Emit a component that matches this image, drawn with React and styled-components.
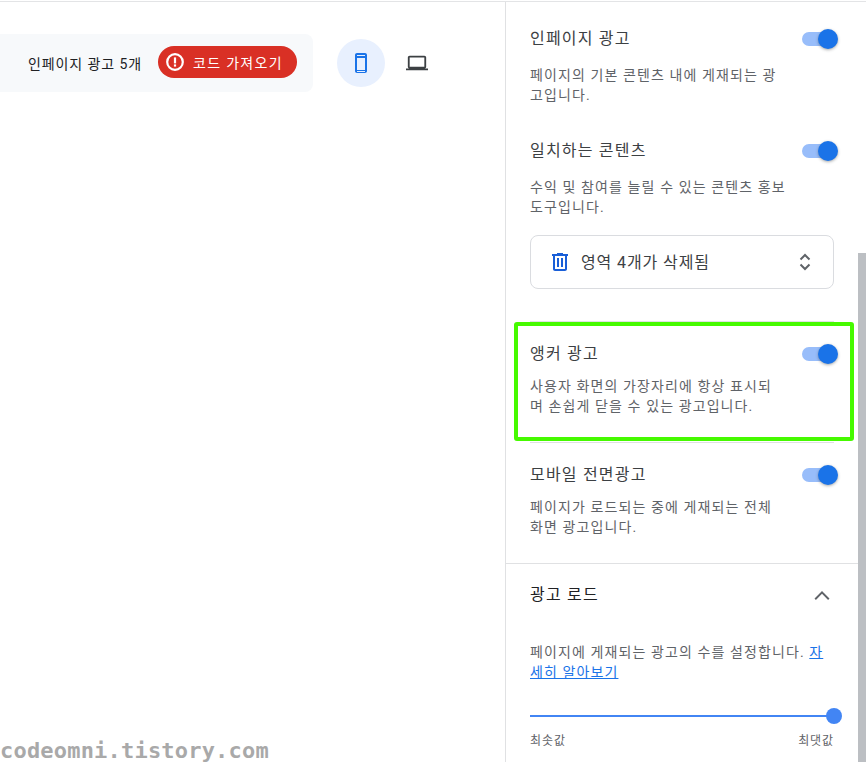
import styled, { createGlobalStyle } from "styled-components";

const GlobalStyle = createGlobalStyle`
  html, body { margin: 0; padding: 0; background: #fff; }
  body { font-family: Roboto, "Noto Sans CJK KR", sans-serif; overflow: hidden; }
`;

const Page = styled.div`
  position: relative;
  width: 866px;
  height: 761px;
  overflow: hidden;
  display: flex;
  border-top: 1px solid #e3e4e6;
  margin-top: 1px;
  box-sizing: border-box;
`;

const Main = styled.div`
  width: 505px;
  flex: none;
  padding-top: 32px;
  box-sizing: border-box;
  display: flex;
  align-items: flex-start;
`;

const Toolbar = styled.div`
  width: 313px;
  height: 58px;
  flex: none;
  background: #f7f9fb;
  border-radius: 0 8px 8px 0;
  display: flex;
  align-items: center;
  padding-left: 28px;
  box-sizing: border-box;
`;

const AdCount = styled.span`
  font-size: 14px;
  color: #202124;
  letter-spacing: 0.9px;
  width: 130px;
  flex: none;
`;

const CodeButton = styled.button`
  width: 139px;
  height: 32px;
  margin-top: -2px;
  border: 0;
  border-radius: 16px;
  background: #d93025;
  color: #fff;
  font: 400 14px Roboto, "Noto Sans CJK KR", sans-serif;
  display: flex;
  align-items: center;
  gap: 8px;
  padding: 0 0 0 7px;
  box-sizing: border-box;
  letter-spacing: 1.3px;
`;

const DeviceGroup = styled.div`
  display: flex;
  align-items: center;
  gap: 8px;
  margin-left: 24px;
  margin-top: 5px;
`;

const DeviceButton = styled.div`
  width: 48px;
  height: 48px;
  border-radius: 50%;
  background: ${(p) => (p.$active ? "#e8f0fe" : "transparent")};
  display: flex;
  align-items: center;
  justify-content: center;
`;

const Panel = styled.aside`
  width: 361px;
  flex: none;
  border-left: 1px solid #e0e1e3;
  box-sizing: border-box;
  display: flex;
  flex-direction: column;
`;

const FormatList = styled.div`
  padding: 25px 32px 0 24px;
  display: flex;
  flex-direction: column;
`;

const Format = styled.div`
  padding-top: ${(p) => p.$pt || 0}px;
  padding-bottom: ${(p) => p.$pb}px;
`;

const FormatHead = styled.div`
  display: flex;
  align-items: center;
  justify-content: space-between;
  height: 24px;
`;

const FormatTitle = styled.div`
  font-size: 16px;
  line-height: 24px;
  color: #3c4043;
  letter-spacing: 1.2px;
`;

const FormatDesc = styled.p`
  margin: ${(p) => p.$mt || 14}px 0 0;
  width: ${(p) => p.$w || 254}px;
  font-size: 14px;
  line-height: 20px;
  color: #5f6368;
  letter-spacing: 1.1px;
`;

const Switch = styled.div`
  position: relative;
  width: 32px;
  height: 14px;
  border-radius: 7px;
  background: #98bdfa;
`;

const Knob = styled.span`
  position: absolute;
  right: -4px;
  top: -3px;
  width: 20px;
  height: 20px;
  border-radius: 50%;
  background: #1a73e8;
  box-shadow: 0 1px 3px rgba(60, 64, 67, 0.45);
`;

const DeletedBox = styled.div`
  height: 54px;
  border: 1px solid #dadce0;
  border-radius: 8px;
  box-sizing: border-box;
  margin: 18px 0 0;
  display: flex;
  align-items: center;
  padding: 0 20px 0 17px;
  font-size: 16px;
  color: #3c4043;
  letter-spacing: 0.9px;
  gap: 9px;
`;

const DeletedText = styled.span`
  flex: 1;
  padding-bottom: 2px;
`;

const Divider = styled.div`
  height: 1px;
  flex: none;
  background: #e0e1e3;
`;

const LoadSection = styled.section`
  padding: 19px 32px 0 24px;
`;

const LoadHead = styled.div`
  display: flex;
  align-items: center;
  justify-content: space-between;
  height: 24px;
`;

const LoadTitle = styled.div`
  font-size: 16px;
  line-height: 24px;
  color: #202124;
  letter-spacing: 1.2px;
`;

const LoadDesc = styled.p`
  margin: 35px 0 0;
  font-size: 14px;
  line-height: 20px;
  color: #5f6368;
  letter-spacing: 1.1px;
  width: 304px;

  a {
    color: #1a73e8;
    text-decoration: underline;
  }
`;

const SliderTrack = styled.div`
  position: relative;
  height: 2px;
  margin-top: 33px;
  background: #4285f4;
  width: 304px;
`;

const SliderThumb = styled.span`
  position: absolute;
  right: -8px;
  top: -7px;
  width: 16px;
  height: 16px;
  border-radius: 50%;
  background: #4285f4;
`;

const SliderLabels = styled.div`
  display: flex;
  justify-content: space-between;
  margin-top: 16px;
  font-size: 12px;
  line-height: 16px;
  color: #5f6368;
  letter-spacing: 0.9px;
`;

const ScrollThumb = styled.div`
  position: absolute;
  left: 858px;
  top: 251px;
  width: 8px;
  height: 520px;
  background: #bcbfc3;
`;

const Highlight = styled.div`
  position: absolute;
  left: 514px;
  top: 320px;
  width: 340px;
  height: 119px;
  box-sizing: border-box;
  border: 4px solid #46fa00;
  border-radius: 3px;
`;

const Watermark = styled.div`
  position: absolute;
  left: 0;
  top: 736px;
  font: 700 22px "DejaVu Sans Mono", "Liberation Mono", monospace;
  line-height: 26px;
  color: #a9a9a9;
  letter-spacing: 0.2px;
`;

const AlertIcon = () => (
  <svg width="20" height="20" viewBox="0 0 20 20" fill="none">
    <circle cx="10" cy="10" r="7.8" stroke="#fff" strokeWidth="2.2" />
    <rect x="8.9" y="5.4" width="2.2" height="6" fill="#fff" />
    <rect x="8.9" y="12.4" width="2.2" height="2.2" fill="#fff" />
  </svg>
);

const PhoneIcon = () => (
  <svg width="24" height="24" viewBox="0 0 24 24" fill="#1a73e8">
    <path d="M16 2H8C6.900 2 6 2.900 6 4v16c0 1.100.9 2 2 2h8c1.100 0 2-.9 2-2V4c0-1.100-.9-2-2-2zm0 2v1H8V4h8zM8 19V7h8v12H8zm0 1.990V20h8v1l-8-.01z" />
  </svg>
);

const LaptopIcon = () => (
  <svg width="22" height="22" viewBox="0 0 24 24" fill="#3c4043">
    <path d="M20 18c1.100 0 2-.9 2-2V6c0-1.100-.9-2-2-2H4c-1.100 0-2 .9-2 2v10c0 1.100.9 2 2 2H0v2h24v-2h-4zM4 6h16v10H4V6z" />
  </svg>
);

const TrashIcon = () => (
  <svg width="24" height="24" viewBox="0 0 24 24" fill="#1a5fd8">
    <path d="M15 4V3H9v1H4v2h1v13c0 1.100.9 2 2 2h10c1.100 0 2-.9 2-2V6h1V4h-5zm2 15H7V6h10v13z" />
    <path d="M9 8h2v9H9zm4 0h2v9h-2z" />
  </svg>
);

const UpDownIcon = () => (
  <svg width="16" height="22" viewBox="0 0 16 22" fill="none" stroke="#5f6368" strokeWidth="2">
    <path d="M3.500 8.500 8 4l4.500 4.500M3.500 13.500 8 18l4.500-4.500" />
  </svg>
);

const ChevronUp = () => (
  <svg width="24" height="24" viewBox="0 0 24 24" fill="#5f6368">
    <path d="M12 8l-7.500 7.500 1.400 1.400L12 10.800l6.100 6.100 1.400-1.400z" />
  </svg>
);

const Toggle = () => (
  <Switch>
    <Knob />
  </Switch>
);

function App() {
  return (
    <Page>
      <GlobalStyle />
      <Main>
        <Toolbar>
          <AdCount>인페이지 광고 5개</AdCount>
          <CodeButton>
            <AlertIcon />
            코드 가져오기
          </CodeButton>
        </Toolbar>
        <DeviceGroup>
          <DeviceButton $active>
            <PhoneIcon />
          </DeviceButton>
          <DeviceButton>
            <LaptopIcon />
          </DeviceButton>
        </DeviceGroup>
      </Main>
      <Panel>
        <FormatList>
          <Format $pb={34}>
            <FormatHead>
              <FormatTitle>인페이지 광고</FormatTitle>
              <Toggle />
            </FormatHead>
            <FormatDesc>페이지의 기본 콘텐츠 내에 게재되는 광고입니다.</FormatDesc>
          </Format>
          <Format $pb={32}>
            <FormatHead>
              <FormatTitle>일치하는 콘텐츠</FormatTitle>
              <Toggle />
            </FormatHead>
            <FormatDesc $w={260}>수익 및 참여를 늘릴 수 있는 콘텐츠 홍보 도구입니다.</FormatDesc>
            <DeletedBox>
              <TrashIcon />
              <DeletedText>영역 4개가 삭제됨</DeletedText>
              <UpDownIcon />
            </DeletedBox>
          </Format>
          <Divider />
          <Format $pt={20} $pb={26}>
            <FormatHead>
              <FormatTitle>앵커 광고</FormatTitle>
              <Toggle />
            </FormatHead>
            <FormatDesc $mt={10}>사용자 화면의 가장자리에 항상 표시되며 손쉽게 닫을 수 있는 광고입니다.</FormatDesc>
          </Format>
          <Divider />
          <Format $pt={20} $pb={26}>
            <FormatHead>
              <FormatTitle>모바일 전면광고</FormatTitle>
              <Toggle />
            </FormatHead>
            <FormatDesc $mt={10}>페이지가 로드되는 중에 게재되는 전체 화면 광고입니다.</FormatDesc>
          </Format>
        </FormatList>
        <Divider />
        <LoadSection>
          <LoadHead>
            <LoadTitle>광고 로드</LoadTitle>
            <ChevronUp />
          </LoadHead>
          <LoadDesc>
            페이지에 게재되는 광고의 수를 설정합니다. <a href="#more">자세히 알아보기</a>
          </LoadDesc>
          <SliderTrack>
            <SliderThumb />
          </SliderTrack>
          <SliderLabels>
            <span>최솟값</span>
            <span>최댓값</span>
          </SliderLabels>
        </LoadSection>
      </Panel>
      <ScrollThumb />
      <Highlight />
      <Watermark>codeomni.tistory.com</Watermark>
    </Page>
  );
}

export default App;
